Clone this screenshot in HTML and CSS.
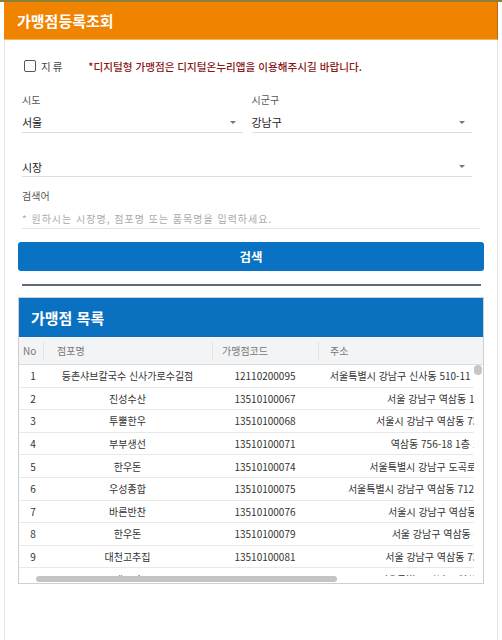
FILE: index.html
```html
<!DOCTYPE html>
<html lang="ko">
<head>
<meta charset="utf-8">
<title>가맹점등록조회</title>
<link rel="stylesheet" href="styles.css">
</head>
<body>
<div class="app">
  <div class="card">
    <div class="title-bar">가맹점등록조회</div>
    <div class="content">
      <div class="check-row">
        <span class="checkbox"></span>
        <span class="check-label">지류</span>
        <span class="notice">*디지털형 가맹점은 디지털온누리앱을 이용해주시길 바랍니다.</span>
      </div>

      <div class="pair">
        <div class="field">
          <div class="label">시도</div>
          <div class="select"><span>서울</span><span class="arrow"></span></div>
        </div>
        <div class="field">
          <div class="label">시군구</div>
          <div class="select"><span>강남구</span><span class="arrow"></span></div>
        </div>
      </div>

      <div class="field single">
        <div class="select"><span>시장</span><span class="arrow"></span></div>
      </div>

      <div class="field search">
        <div class="label">검색어</div>
        <div class="input">* 원하시는 시장명, 점포명 또는 품목명을 입력하세요.</div>
      </div>

      <button class="btn" type="button">검색</button>

      <div class="divider"></div>

      <div class="panel">
        <div class="panel-title">가맹점 목록</div>
        <div class="thead">
          <div class="th no">No</div>
          <div class="th sep">점포명</div>
          <div class="th sep">가맹점코드</div>
          <div class="th sep">주소</div>
        </div>
        <div class="tbody-wrap">
          <div class="viewport">
            <div class="tr"><div class="td no">1</div><div class="td">등촌샤브칼국수 신사가로수길점</div><div class="td">12110200095</div><div class="td">서울특별시 강남구 신사동 510-11 2층 신사가로수길점 (가로수길빌딩)</div></div>
            <div class="tr"><div class="td no">2</div><div class="td">진성수산</div><div class="td">13510100067</div><div class="td">서울 강남구 역삼동 123-456 진성빌딩 1층</div></div>
            <div class="tr"><div class="td no">3</div><div class="td">투뿔한우</div><div class="td">13510100068</div><div class="td">서울시 강남구 역삼동 737-12 투뿔한우빌딩 1층</div></div>
            <div class="tr"><div class="td no">4</div><div class="td">부부생선</div><div class="td">13510100071</div><div class="td">역삼동 756-18 1층 101호 부부생선 본점</div></div>
            <div class="tr"><div class="td no">5</div><div class="td">한우돈</div><div class="td">13510100074</div><div class="td">서울특별시 강남구 도곡로 123 (역삼동) 1층 한우돈</div></div>
            <div class="tr"><div class="td no">6</div><div class="td">우성종합</div><div class="td">13510100075</div><div class="td">서울특별시 강남구 역삼동 712-34 우성종합상가동 1층 102호</div></div>
            <div class="tr"><div class="td no">7</div><div class="td">바른반찬</div><div class="td">13510100076</div><div class="td">서울시 강남구 역삼동 648-2 바른반찬 1층</div></div>
            <div class="tr"><div class="td no">8</div><div class="td">한우돈</div><div class="td">13510100079</div><div class="td">서울 강남구 역삼동 650-123 한우돈 1층</div></div>
            <div class="tr"><div class="td no">9</div><div class="td">대천고추집</div><div class="td">13510100081</div><div class="td">서울 강남구 역삼동 736-15 대천고추집 1층</div></div>
            <div class="tr"><div class="td no">10</div><div class="td">씨앤씨마트</div><div class="td">13510100083</div><div class="td">서울특별시 강남구 역삼동 123 씨앤씨마트 1층</div></div>
          </div>
          <div class="vscroll"><span class="vthumb"></span></div>
        </div>
        <div class="hscroll"><span class="hthumb"></span></div>
      </div>
    </div>
  </div>
</div>
</body>
</html>
```

FILE: styles.css
```css
* { box-sizing: border-box; }

html, body {
  margin: 0;
  padding: 0;
  background: #ffffff;
  font-family: "Noto Sans CJK KR", "Noto Sans", sans-serif;
  color: #333333;
}

.app {
  border-top: 2px solid #8e8034;
  height: 640px;
  overflow: hidden;
}

.card {
  margin-left: 4px;
  width: 494px;
  min-height: 700px;
  border-left: 1px solid #e3e3e3;
  border-right: 1px solid #e3e3e3;
}

.title-bar {
  margin: 0 -1px;
  height: 38px;
  line-height: 38px;
  background: #f08300;
  border-right: 1px solid #b86c12;
  border-bottom: 1px solid #f3b466;
  color: #ffffff;
  font-size: 15px;
  font-weight: 700;
  padding-left: 13px;
}

.content {
  padding: 15px 13px 0 13px;
}

.check-row {
  height: 22px;
  display: flex;
  align-items: center;
  padding-left: 6px;
}

.checkbox {
  width: 12px;
  height: 12px;
  border: 1.5px solid #555555;
  border-radius: 2px;
  background: #ffffff;
}

.check-label {
  margin-left: 5px;
  font-size: 10.5px;
  letter-spacing: 2px;
  color: #444444;
}

.notice {
  margin-left: 24px;
  font-size: 10.6px;
  font-weight: 500;
  color: #8a1717;
}

.pair {
  margin-top: 16px;
  padding: 0 12px 0 4px;
  display: grid;
  grid-template-columns: 1fr 1fr;
  column-gap: 9px;
}

.label {
  font-size: 10px;
  line-height: 14px;
  color: #555555;
}

.select {
  margin-top: 5px;
  height: 21px;
  border-bottom: 1px solid #dddddd;
  display: flex;
  align-items: center;
  justify-content: space-between;
  font-size: 11px;
  color: #222222;
}

.arrow {
  width: 0;
  height: 0;
  margin-right: 7px;
  border-left: 3px solid transparent;
  border-right: 3px solid transparent;
  border-top: 3px solid #777777;
}

.single {
  margin: 24px 12px 0 4px;
}

.single .select {
  margin-top: 0;
  height: 20px;
}

.search {
  margin: 12px 4px 0 4px;
}

.input {
  margin-top: 5px;
  height: 21px;
  border-bottom: 1px solid #e3e3e3;
  display: flex;
  align-items: center;
  font-size: 10px;
  letter-spacing: 1px;
  color: #aaaaaa;
}

.btn {
  display: block;
  width: 100%;
  margin-top: 13px;
  height: 29px;
  border: none;
  border-radius: 3px;
  background: #0a72c3;
  color: #ffffff;
  font-family: inherit;
  font-size: 12.5px;
  font-weight: 700;
  padding: 0;
}

.divider {
  margin: 13px 3px 0 4px;
  height: 2px;
  background: #5f6c79;
}

.panel {
  margin-top: 11px;
  border: 1px solid #cfcfcf;
  overflow: hidden;
}

.panel-title {
  height: 39px;
  line-height: 39px;
  background: #0a70c0;
  color: #ffffff;
  font-size: 15px;
  font-weight: 700;
  padding-left: 12px;
}

.thead,
.tr {
  display: grid;
  grid-template-columns: 24px 169px 106px 314px;
  width: 613px;
}

.thead {
  height: 28px;
  align-items: center;
  background: #f3f4f5;
  border-bottom: 1px solid #dcdcdc;
  width: 100%;
}

.th {
  font-size: 10px;
  color: #777777;
  line-height: 18px;
  white-space: nowrap;
  padding-left: 12px;
}

.th.no {
  padding-left: 4px;
}

.th.sep {
  border-left: 1px solid #e2e2e2;
}

.th:nth-child(2) { padding-left: 13px; }
.th:nth-child(3) { padding-left: 9px; }
.th:nth-child(4) { padding-left: 11px; }

.tbody-wrap {
  display: flex;
  height: 211px;
}

.viewport {
  flex: 1;
  overflow: hidden;
}

.tr {
  height: 22.6px;
  border-bottom: 1px solid #e9e9e9;
  align-items: center;
}

.td {
  font-size: 10px;
  color: #333333;
  text-align: center;
  white-space: nowrap;
  overflow: hidden;
}

.td.no {
  padding-left: 4px;
}

.vscroll {
  width: 9px;
  position: relative;
}

.vthumb {
  position: absolute;
  left: 0;
  top: 0;
  width: 8px;
  height: 10px;
  border-radius: 5px;
  background: #c6c6c6;
}

.hscroll {
  height: 7px;
  position: relative;
  background: #ffffff;
}

.hthumb {
  position: absolute;
  left: 17px;
  top: 0;
  width: 301px;
  height: 6px;
  border-radius: 3px;
  background: #c4c4c4;
}
```
